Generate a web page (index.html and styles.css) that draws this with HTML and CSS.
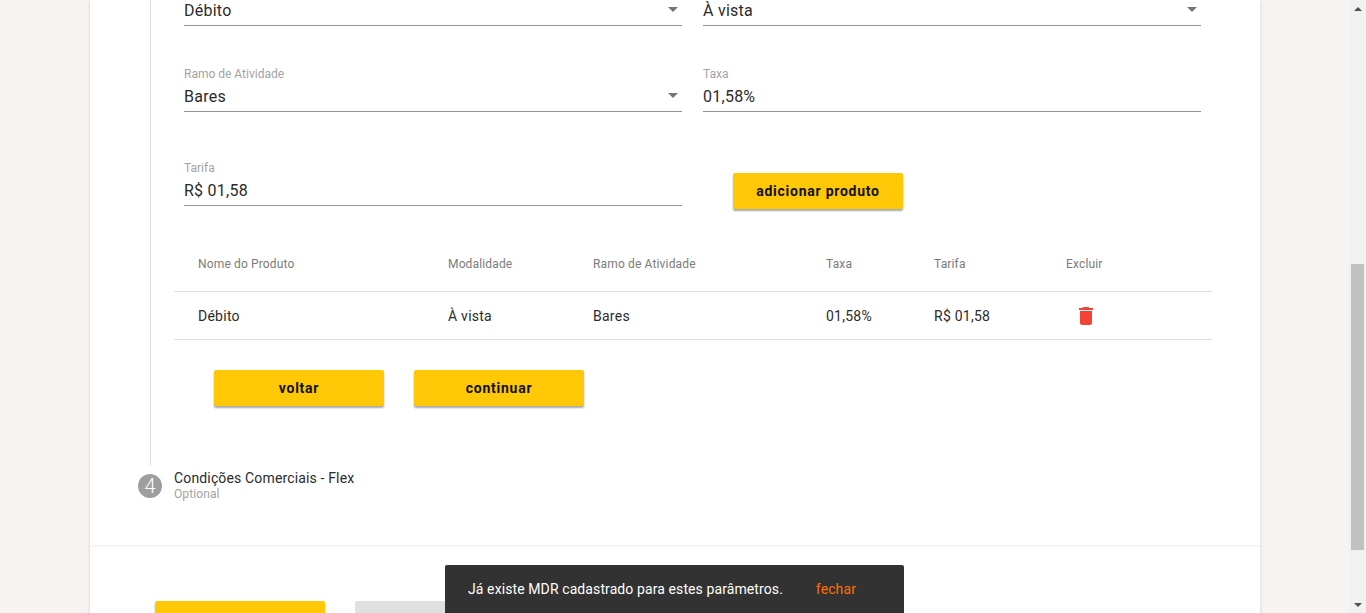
FILE: index.html
```html
<!DOCTYPE html>
<html>
    <head>
        <title> Condições Comerciais </title>
        <link rel="stylesheet" href="styles.css">
    </head>
    <body>
        <div class="page">
            <div class="card">
                <div class="card-main">
                    <div class="step-body">
                        <div class="form-row">
                            <div class="field">
                                <div class="field-value value-first">Débito<span class="arrow"></span></div>
                            </div>
                            <div class="field">
                                <div class="field-value value-first">À vista<span class="arrow"></span></div>
                            </div>
                        </div>
                        <div class="form-row row-second">
                            <div class="field">
                                <div class="field-label">Ramo de Atividade</div>
                                <div class="field-value">Bares<span class="arrow"></span></div>
                            </div>
                            <div class="field">
                                <div class="field-label">Taxa</div>
                                <div class="field-value">01,58%</div>
                            </div>
                        </div>
                        <div class="form-row row-third">
                            <div class="field">
                                <div class="field-label">Tarifa</div>
                                <div class="field-value">R$ 01,58</div>
                            </div>
                            <button class="button add-button">adicionar produto</button>
                        </div>

                        <div class="table">
                            <div class="table-row table-head">
                                <div>Nome do Produto</div>
                                <div>Modalidade</div>
                                <div>Ramo de Atividade</div>
                                <div>Taxa</div>
                                <div>Tarifa</div>
                                <div>Excluir</div>
                            </div>
                            <div class="table-row">
                                <div>Débito</div>
                                <div>À vista</div>
                                <div>Bares</div>
                                <div>01,58%</div>
                                <div>R$ 01,58</div>
                                <div>
                                    <svg class="trash" width="24" height="24" viewBox="0 0 24 24"><path d="M6 19c0 1.1.9 2 2 2h8c1.1 0 2-.9 2-2V7H6v12zM19 4h-3.5l-1-1h-5l-1 1H5v2h14V4z"/></svg>
                                </div>
                            </div>
                        </div>

                        <div class="step-actions">
                            <button class="button">voltar</button>
                            <button class="button">continuar</button>
                        </div>
                    </div>

                    <div class="step-header">
                        <div class="step-number">4</div>
                        <div>
                            <div class="step-title">Condições Comerciais - Flex</div>
                            <div class="step-optional">Optional</div>
                        </div>
                    </div>
                </div>
                <div class="card-footer">
                    <button class="button"></button>
                    <button class="button button-disabled"></button>
                </div>
            </div>
        </div>

        <div class="scrollbar">
            <div class="scroll-up"></div>
            <div class="scroll-track"><div class="scroll-thumb"></div></div>
            <div class="scroll-down"></div>
        </div>

        <div class="snackbar">
            <span>Já existe MDR cadastrado para estes parâmetros.</span>
            <span class="snackbar-action">fechar</span>
        </div>
    </body>
</html>
```

FILE: styles.css
```css
html, body {
    height: 100%;
}
body {
    display: flex;
    height: 613px;
    margin: 0;
    overflow: hidden;
    font-family: Roboto, "Liberation Sans", sans-serif;
    background-color: #f6f3f0;
    color: #2b2b2b;
}

.page {
    flex: 1;
    padding-left: 90px;
    overflow: hidden;
}
.card {
    width: 1170px;
    background-color: #fff;
    box-shadow: 0 1px 3px rgba(0, 0, 0, 0.16);
}
.card-main {
    height: 547px;
    box-sizing: border-box;
    border-bottom: 2px solid #f5f5f5;
}

.step-body {
    height: 466px;
    box-sizing: border-box;
    margin-left: 60px;
    padding-left: 23px;
    border-left: 1px solid #dedede;
}
.form-row {
    display: flex;
    gap: 21px;
    padding-left: 10px;
}
.row-second {
    margin-top: 40px;
}
.row-third {
    margin-top: 48px;
}
.field {
    width: 498px;
}
.field-label {
    height: 16px;
    margin-bottom: 2px;
    font-size: 12px;
    line-height: 16px;
    color: #a3a3a3;
}
.field-value {
    display: flex;
    justify-content: space-between;
    align-items: center;
    height: 28px;
    box-sizing: border-box;
    padding-bottom: 1px;
    font-size: 16px;
    line-height: 24px;
    letter-spacing: 0.25px;
    border-bottom: 1px solid #949494;
}
.value-first {
    height: 26px;
    padding-bottom: 4px;
    line-height: 20px;
}
.arrow {
    width: 0;
    height: 0;
    margin-right: 4px;
    margin-bottom: 3px;
    border-left: 5px solid transparent;
    border-right: 5px solid transparent;
    border-top: 5px solid #757575;
}

.button {
    width: 170px;
    height: 36px;
    padding: 0;
    font-family: Roboto, "Liberation Sans", sans-serif;
    font-size: 14px;
    font-weight: 700;
    letter-spacing: 0.75px;
    color: #111;
    background-color: #ffc807;
    border: none;
    border-radius: 2px;
    box-shadow: 0 2px 2px rgba(0, 0, 0, 0.35);
}
.add-button {
    margin-top: 13px;
    margin-left: 30px;
}
.button-disabled {
    background-color: #e0e0e0;
    box-shadow: none;
}

.table {
    width: 1038px;
    margin-top: 27px;
}
.table-row {
    display: grid;
    grid-template-columns: 250px 145px 233px 108px 132px 1fr;
    align-items: center;
    height: 48px;
    box-sizing: border-box;
    padding-left: 24px;
    font-size: 14px;
    letter-spacing: 0.25px;
    border-bottom: 1px solid #e0e0e0;
}
.table-head {
    height: 56px;
    font-size: 12px;
    letter-spacing: 0.15px;
    color: #7b7b7b;
}
.trash {
    display: block;
    margin-left: 8px;
    fill: #f44336;
}
.step-actions {
    display: flex;
    gap: 30px;
    margin-top: 30px;
    padding-left: 40px;
}

.step-header {
    display: flex;
    align-items: center;
    gap: 12px;
    margin-left: 48px;
    padding-top: 4px;
}
.step-number {
    width: 24px;
    height: 24px;
    font-size: 20px;
    font-weight: 300;
    line-height: 24px;
    text-align: center;
    color: #fff;
    background-color: #9e9e9e;
    border-radius: 50%;
}
.step-title {
    font-size: 14px;
    line-height: 16px;
    letter-spacing: 0.15px;
}
.step-optional {
    font-size: 12px;
    line-height: 16px;
    letter-spacing: 0.1px;
    color: #a3a3a3;
}

.card-footer {
    display: flex;
    gap: 30px;
    height: 120px;
    box-sizing: border-box;
    padding-top: 54px;
    padding-left: 65px;
}

.scrollbar {
    display: flex;
    flex-direction: column;
    width: 17px;
    background-color: #f1f1f1;
}
.scroll-up, .scroll-down {
    flex: none;
    display: flex;
    justify-content: center;
    align-items: center;
    height: 17px;
}
.scroll-up::before {
    content: "";
    border-left: 4px solid transparent;
    border-right: 4px solid transparent;
    border-bottom: 4px solid #505050;
}
.scroll-down::before {
    content: "";
    border-left: 4px solid transparent;
    border-right: 4px solid transparent;
    border-top: 4px solid #505050;
}
.scroll-track {
    flex: 1;
    padding-top: 247px;
}
.scroll-thumb {
    width: 13px;
    height: 286px;
    margin-left: 2px;
    background-color: #c1c1c1;
}

.snackbar {
    position: absolute;
    left: 445px;
    top: 565px;
    display: flex;
    justify-content: space-between;
    align-items: center;
    width: 459px;
    height: 48px;
    box-sizing: border-box;
    padding: 0 48px 0 23px;
    font-size: 14px;
    letter-spacing: 0.1px;
    color: #fff;
    background-color: #323232;
    border-radius: 2px 2px 0 0;
}
.snackbar-action {
    color: #ff6d00;
}
```
